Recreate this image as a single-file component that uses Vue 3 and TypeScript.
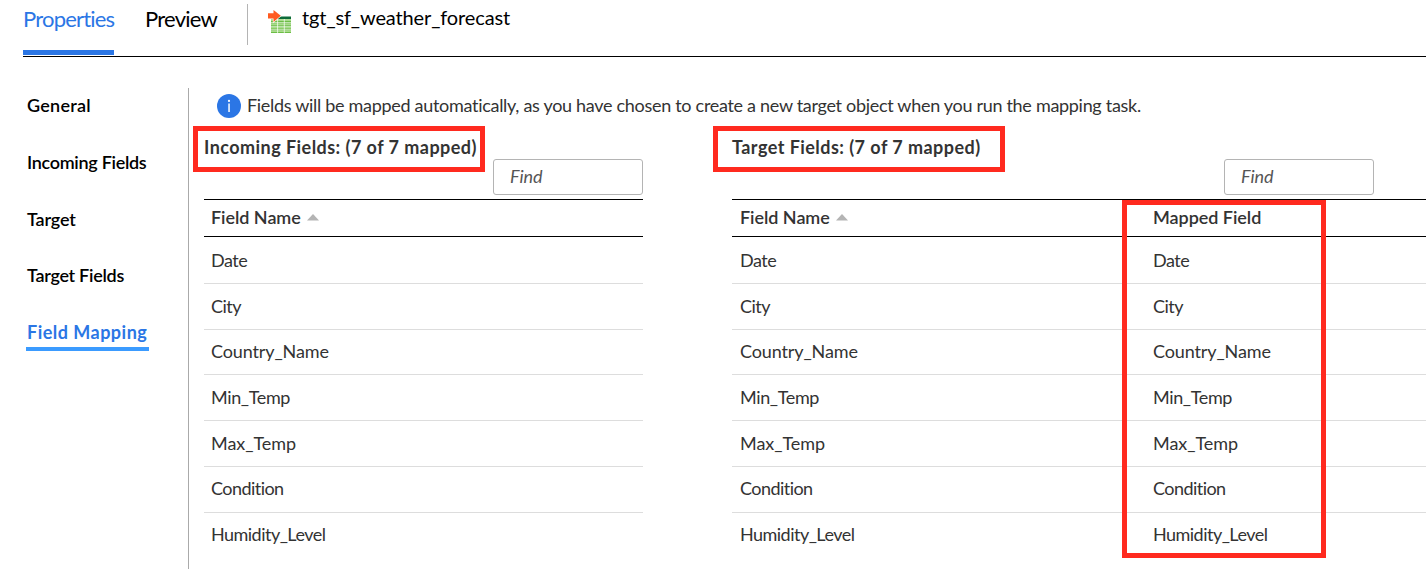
<script setup lang="ts">
interface NavItem {
  label: string
  kind: string
}

const navItems: NavItem[] = [
  { label: 'General', kind: 'general' },
  { label: 'Incoming Fields', kind: 'incoming' },
  { label: 'Target', kind: 'target' },
  { label: 'Target Fields', kind: 'target-fields' },
  { label: 'Field Mapping', kind: 'active' },
]

const fields: string[] = [
  'Date',
  'City',
  'Country_Name',
  'Min_Temp',
  'Max_Temp',
  'Condition',
  'Humidity_Level',
]
</script>

<template>
  <div class="panel">
    <header class="tabs">
      <div class="tab tab-active"><span>Properties</span></div>
      <div class="tab tab-preview"><span>Preview</span></div>
      <div class="object">
        <svg class="object-icon" width="24" height="24" viewBox="0 0 24 24">
          <path fill="#0c6b39" d="M10 6.500h13V9H10z" />
          <path fill="#6cbd45" d="M3 9.500h20V23H3z" />
          <path fill="#a9dc8c" d="M3 9.500h20v1.500H3zM3 13.500h20V15H3zM3 17h20v1.500H3zM3 20.500h20V22H3z" />
          <path stroke="#fff" stroke-width=".7" d="M3 12.700h20M3 16.300h20M3 19.800h20M9.600 9v14M16.300 9v14" />
          <path fill="#ff5a1f" stroke="#fff" stroke-width="1.200" paint-order="stroke" d="M0 3.200h5.500V0L12.800 5.700 5.500 12V8.500H0z" />
        </svg>
        <span class="object-name">tgt_sf_weather_forecast</span>
      </div>
    </header>

    <div class="body">
      <nav class="nav">
        <div v-for="item in navItems" :key="item.label" class="nav-row">
          <span :class="['nav-label', item.kind]">{{ item.label }}</span>
        </div>
      </nav>

      <main class="content">
        <div class="info">
          <svg width="24" height="24" viewBox="0 0 24 24">
            <circle cx="12" cy="12" r="12" fill="#2b76e5" />
            <path fill="#fff" d="M11.300 9.500h1.500V18h-1.500z" />
            <circle cx="12" cy="6.900" r="1.100" fill="#fff" />
          </svg>
          <span class="info-text">Fields will be mapped automatically, as you have chosen to create a new target object when you run the mapping task.</span>
        </div>

        <div class="tables">
          <section class="table incoming-table">
            <div class="toolbar">
              <h2 class="title-incoming">Incoming Fields: (7 of 7 mapped)</h2>
              <div class="find"><span>Find</span></div>
            </div>
            <div class="grid">
              <div class="row head">
                <span class="cell">Field Name</span>
                <svg class="sort" width="12" height="7" viewBox="0 0 12 7"><path fill="#b4b4b4" d="M6 0l6 6.500H0z" /></svg>
              </div>
              <div v-for="field in fields" :key="field" :class="['row', field]">
                <span class="cell">{{ field }}</span>
              </div>
            </div>
          </section>

          <section class="table target-table">
            <div class="toolbar">
              <h2 class="title-target">Target Fields: (7 of 7 mapped)</h2>
              <div class="find"><span>Find</span></div>
            </div>
            <div class="grid">
              <div class="row head">
                <div class="column">
                  <span class="cell">Field Name</span>
                  <svg class="sort" width="12" height="7" viewBox="0 0 12 7"><path fill="#b4b4b4" d="M6 0l6 6.500H0z" /></svg>
                </div>
                <span class="cell mapped">Mapped Field</span>
              </div>
              <div v-for="field in fields" :key="field" :class="['row', field]">
                <div class="column"><span class="cell">{{ field }}</span></div>
                <span class="cell">{{ field }}</span>
              </div>
            </div>
          </section>
        </div>
      </main>
    </div>

    <div class="mark mark-incoming"></div>
    <div class="mark mark-target"></div>
    <div class="mark mark-mapped"></div>
  </div>
</template>

<style>
body {
  margin: 0;
  background: #fff;
}
</style>

<style scoped>
.panel {
  position: relative;
  box-sizing: border-box;
  width: 1426px;
  height: 569px;
  overflow: hidden;
  padding-left: 23px;
  background: #fff;
  color: #333;
  font: 18px/24px Lato, "Liberation Sans", sans-serif;
  font-variant-ligatures: none;
  white-space: nowrap;
}
.tabs {
  box-sizing: border-box;
  display: flex;
  height: 57px;
  border-bottom: 1px solid #000;
  color: #000;
  font-size: 22px;
  line-height: 28px;
}
.tab {
  box-sizing: border-box;
  height: 55px;
  padding-top: 5px;
}
.tab-active {
  width: 91px;
  margin-right: 31px;
  border-bottom: 5px solid #2b76e5;
  color: #2b76e5;
  letter-spacing: -0.8px;
}
.tab-preview {
  width: 102px;
  letter-spacing: -0.75px;
}
.object {
  display: flex;
  height: 41px;
  margin-top: 4px;
  padding-left: 20px;
  border-left: 1px solid #b4b4b4;
  font-size: 20px;
}
.object-icon {
  margin-top: 6px;
  overflow: visible;
}
.object-name {
  margin: -1px 0 0 10px;
  letter-spacing: -0.12px;
}
.body {
  display: flex;
  margin-top: 31px;
  height: 481px;
}
.nav {
  width: 165px;
  border-right: 1px solid #aaa;
  color: #000;
  font-weight: 600;
}
.nav-row {
  height: 56.800px;
  padding: 5px 0 0 3px;
  box-sizing: border-box;
}
.nav-label {
  display: inline-block;
  padding-left: 1px;
}
.general {
  letter-spacing: 0.25px;
}
.incoming {
  margin-top: -1px;
  letter-spacing: -0.3px;
}
.target {
  margin-top: -1px;
  letter-spacing: -0.15px;
}
.target-fields {
  letter-spacing: -0.28px;
}
.active {
  box-sizing: border-box;
  width: 123px;
  height: 31px;
  border-bottom: 4px solid #3b9bff;
  color: #2b76e5;
  font-weight: 700;
  letter-spacing: 0.48px;
}
.content {
  flex: 1;
  min-width: 0;
}
.info {
  display: flex;
  padding: 6px 0 0 28px;
  height: 30px;
}
.info-text {
  margin: -1px 0 0 6px;
  letter-spacing: -0.3px;
}
.tables {
  display: flex;
  padding-left: 15px;
}
.incoming-table {
  width: 439px;
  margin-right: 89px;
}
.target-table {
  width: 694px;
}
.toolbar {
  display: flex;
  justify-content: space-between;
  height: 75px;
}
h2 {
  margin: 11px 0 0;
  font-size: 18px;
  line-height: 24px;
  font-weight: 700;
  letter-spacing: 0.45px;
}
.find {
  box-sizing: border-box;
  flex: none;
  width: 150px;
  height: 36px;
  margin: 35px 0 0 -40px;
  padding: 4px 0 0 16px;
  border: 1px solid #b4b4b4;
  border-radius: 3px;
  color: #555;
  font-style: italic;
}
.target-table .find {
  margin-right: 52px;
}
.grid {
  display: grid;
  grid-template-rows: 38px 47px 46px 45px 46px 46px 46px 46px;
}
.row {
  box-sizing: border-box;
  display: flex;
  align-items: center;
  padding: 0 0 2px 8px;
  border-bottom: 1px solid #ddd;
}
.incoming-table .row {
  padding-left: 7px;
}
.row:last-child {
  border-bottom: 0;
}
.head {
  border-top: 1px solid #000;
  border-bottom: 1px solid #000;
  font-weight: 600;
  letter-spacing: -0.05px;
}
.Date {
  padding-bottom: 0;
  letter-spacing: -0.5px;
}
.City {
  letter-spacing: -0.5px;
}
.Country_Name {
  letter-spacing: -0.12px;
}
.Min_Temp {
  letter-spacing: -0.37px;
}
.Max_Temp {
  letter-spacing: -0.05px;
}
.Condition {
  padding-bottom: 4px;
  letter-spacing: -0.55px;
}
.Humidity_Level {
  padding-bottom: 4px;
  letter-spacing: -0.53px;
}
.column {
  display: flex;
  align-items: center;
  width: 413px;
}
.sort {
  margin-left: 6px;
}
.mark {
  position: absolute;
  box-sizing: border-box;
  border: 5px solid #ff2a1f;
}
.mark-incoming {
  left: 193px;
  top: 126px;
  width: 292px;
  height: 46px;
}
.mark-target {
  left: 713px;
  top: 126px;
  width: 292px;
  height: 46px;
}
.mark-mapped {
  left: 1122px;
  top: 200px;
  width: 204px;
  height: 358px;
}
</style>
